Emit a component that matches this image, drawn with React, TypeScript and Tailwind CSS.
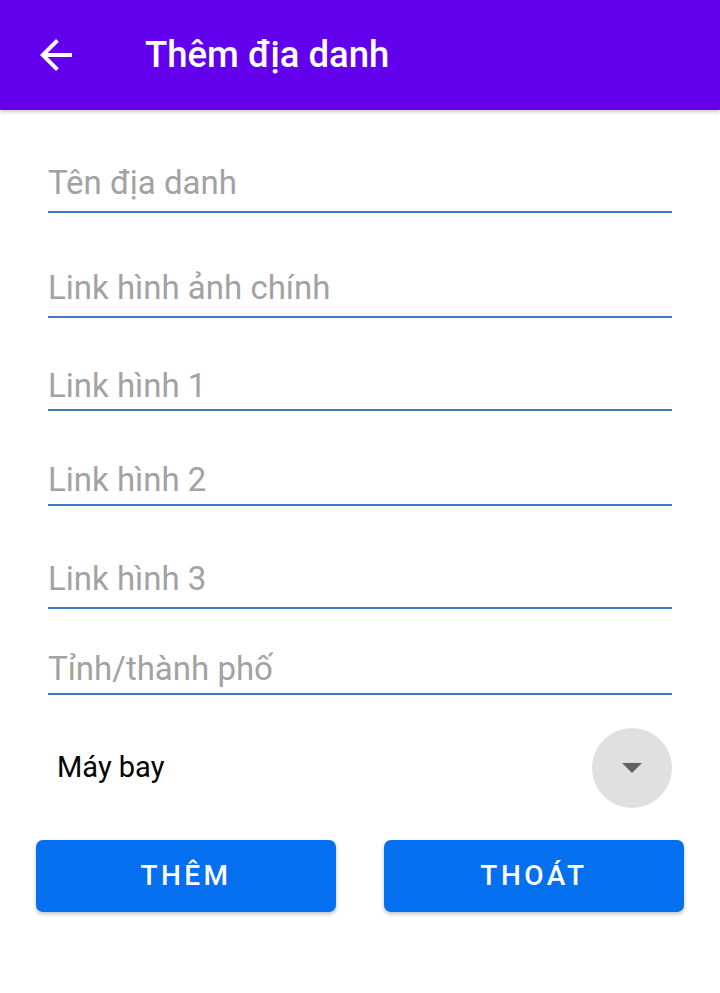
import React from "react"

function Field({ label, className }: { label: string; className: string }) {
    return (
        <div className={`border-b-2 border-[#3a7bc2] ${className}`}>
            <div className="text-[33px] leading-[40px] text-[#a2a2a2]">{label}</div>
        </div>
    )
}

export default function App() {
    return (
        <div className="min-h-[993px] bg-white font-['Roboto',sans-serif]">
            {/* toolbar */}
            <div className="h-[110px] bg-[#6200ee] flex items-center shadow-[0_2px_4px_rgba(0,0,0,0.2)]">
                <svg className="ml-[32px] w-[48px] h-[48px]" viewBox="0 0 24 24" fill="white">
                    <path d="M20 11H7.83l5.59-5.59L12 4l-8 8 8 8 1.41-1.41L7.83 13H20v-2z" />
                </svg>
                <h1 className="ml-[65px] text-white text-[36.5px] font-medium">Thêm địa danh</h1>
            </div>

            <div className="px-[48px]">
                <Field label="Tên địa danh" className="mt-[53px] pb-[8px]" />
                <Field label="Link hình ảnh chính" className="mt-[55px] pb-[8px]" />
                <Field label="Link hình 1" className="mt-[48px] pb-[3px]" />
                <Field label="Link hình 2" className="mt-[49px] pb-[4px]" />
                <Field label="Link hình 3" className="mt-[53px] pb-[8px]" />
                <Field label="Tỉnh/thành phố" className="mt-[40px] pb-[4px]" />

                {/* spinner */}
                <div className="mt-[33px] flex items-center justify-between">
                    <span className="ml-[9px] text-[29px] text-black">Máy bay</span>
                    <div className="w-[80px] h-[80px] rounded-full bg-[#e0e0e0] flex items-center justify-center">
                        <svg width="20" height="10" viewBox="0 0 20 10">
                            <path d="M0 0h20L10 10z" fill="#616161" />
                        </svg>
                    </div>
                </div>
            </div>

            <div className="mt-[32px] px-[36px] flex justify-between">
                <button className="w-[300px] h-[72px] rounded-[7px] bg-[#0570ef] text-white text-[28px] font-medium tracking-[3.5px] shadow-[0_2px_4px_rgba(0,0,0,0.25)]">
                    THÊM
                </button>
                <button className="w-[300px] h-[72px] rounded-[7px] bg-[#0570ef] text-white text-[28px] font-medium tracking-[3.5px] shadow-[0_2px_4px_rgba(0,0,0,0.25)]">
                    THOÁT
                </button>
            </div>
        </div>
    )
}
